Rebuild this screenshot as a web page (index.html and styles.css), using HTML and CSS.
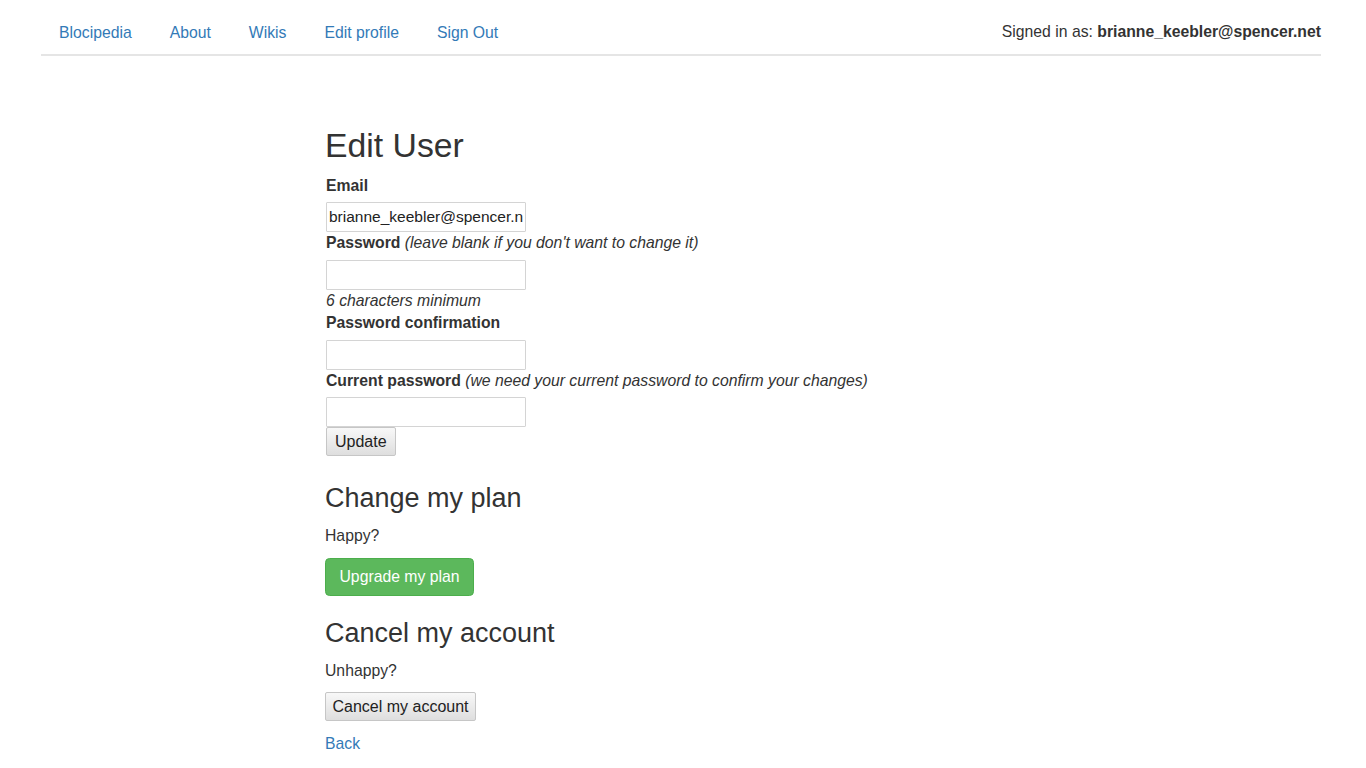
FILE: index.html
```html
<!DOCTYPE html>
<html lang="en">
<head>
<meta charset="utf-8">
<title>Edit User</title>
<link rel="stylesheet" href="styles.css">
</head>
<body>
<header class="topbar">
  <div class="bar">
    <ul class="nav">
      <li><a href="#">Blocipedia</a></li>
      <li><a href="#">About</a></li>
      <li><a href="#">Wikis</a></li>
      <li><a href="#">Edit profile</a></li>
      <li><a href="#">Sign Out</a></li>
    </ul>
    <div class="signed">Signed in as: <strong>brianne_keebler@spencer.net</strong></div>
  </div>
</header>
<main class="page">
  <h2 class="title">Edit User</h2>
  <form class="edit-form">
    <label class="field-label">Email</label>
    <input class="field-input" type="email" value="brianne_keebler@spencer.net">
    <label class="field-label">Password <i class="note">(leave blank if you don't want to change it)</i></label>
    <input class="field-input" type="password">
    <div class="hint">6 characters minimum</div>
    <label class="field-label">Password confirmation</label>
    <input class="field-input" type="password">
    <label class="field-label">Current password <i class="note">(we need your current password to confirm your changes)</i></label>
    <input class="field-input" type="password">
    <div class="actions"><button type="button" class="plain-btn">Update</button></div>
  </form>
  <h3 class="section-title first">Change my plan</h3>
  <p class="section-text">Happy?</p>
  <div class="btn-row"><button type="button" class="btn-success">Upgrade my plan</button></div>
  <h3 class="section-title">Cancel my account</h3>
  <p class="section-text">Unhappy?</p>
  <div class="btn-row"><button type="button" class="plain-btn cancel">Cancel my account</button></div>
  <a class="back" href="#">Back</a>
</main>
</body>
</html>
```
FILE: styles.css
```css
* { box-sizing: border-box; }
html, body { margin: 0; padding: 0; background: #fff; }
body {
  font-family: "Liberation Sans", Arial, Helvetica, sans-serif;
  font-size: 15.75px;
  line-height: 22.5px;
  color: #333;
}
a { color: #337ab7; text-decoration: none; }

.topbar { padding: 11px 45px 0 41px; }
.bar {
  display: flex;
  justify-content: space-between;
  align-items: center;
  border-bottom: 2px solid #e5e5e5;
}
.nav {
  list-style: none;
  margin: 0;
  padding: 0 0 0 1px;
  display: flex;
  gap: 4px;
}
.nav a {
  display: block;
  padding: 11.25px 17px 9.25px;
}
.signed { color: #333; padding-bottom: 1px; }
.signed strong { font-weight: bold; }

.page { padding: 70.5px 0 0 325px; }
.title {
  margin: 0 0 11.25px;
  font-size: 33.75px;
  font-weight: 500;
  line-height: 1.1;
  color: #333;
}
.edit-form { display: flex; flex-direction: column; align-items: flex-start; }
.field-label {
  display: block;
  font-weight: bold;
  margin: 0 0 5px 1px;
}
.field-label .note { font-weight: normal; font-style: italic; }
.field-input {
  display: block;
  width: 200px;
  height: 30px;
  margin: 0 0 0 1px;
  padding: 1px 2px;
  border: 1px solid #d4d4d4;
  border-radius: 1px;
  font-family: "Liberation Sans", Arial, sans-serif;
  font-size: 15.5px;
  color: #222;
  background: #fff;
}
.hint { font-style: italic; margin-left: 1px; }
.actions { margin-left: 1px; }
.plain-btn {
  display: block;
  height: 29px;
  padding: 0 8px;
  border: 1px solid #c6c6c6;
  border-radius: 2px;
  background: linear-gradient(#f8f8f8, #dedede);
  font-family: "Liberation Sans", Arial, sans-serif;
  font-size: 16px;
  color: #222;
}
.section-title {
  margin: 22.5px 0 11.25px;
  font-size: 27px;
  font-weight: 500;
  line-height: 1.1;
  color: #333;
}
.section-title.first { margin-top: 27.5px; }
.section-text { margin: 0 0 10.25px; }
.btn-row { display: flex; }
.btn-success {
  padding: 7px 13.5px;
  border: 1px solid #4cae4c;
  border-radius: 4.5px;
  background: #5cb85c;
  color: #fff;
  font-family: "Liberation Sans", Arial, sans-serif;
  font-size: 15.75px;
  line-height: 22.5px;
}
.btn-row .plain-btn.cancel { height: 28.5px; padding: 0 6.5px; }
.back { display: inline-block; margin-top: 12px; }
```
